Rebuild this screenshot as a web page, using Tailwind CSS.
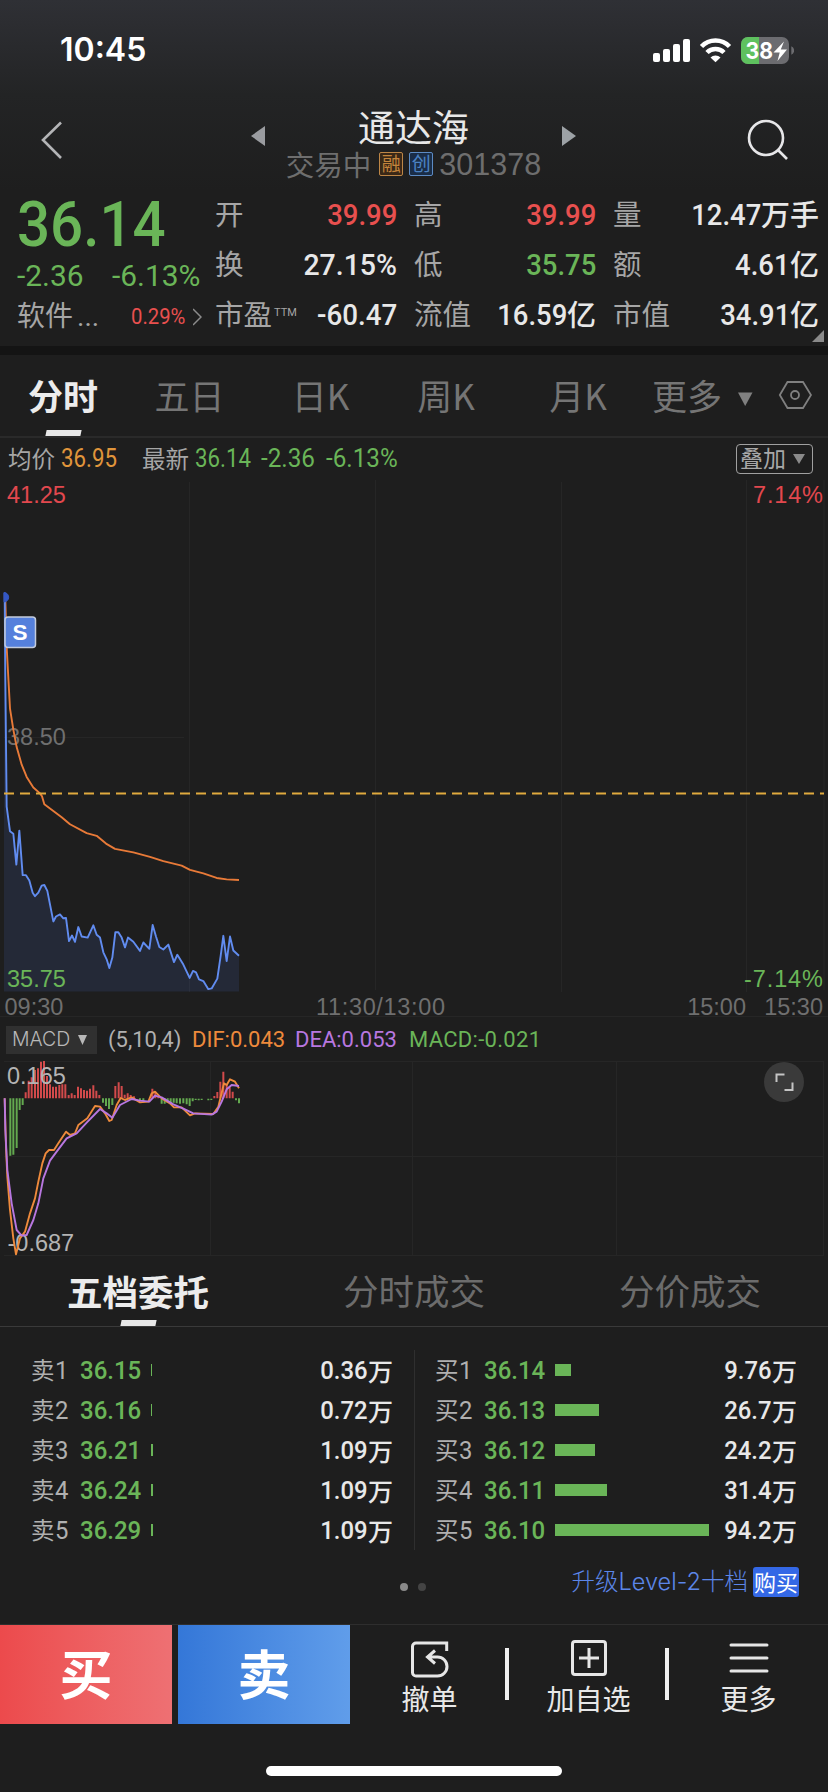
<!DOCTYPE html>
<html lang="zh-CN">
<head>
<meta charset="utf-8">
<title>通达海 301378</title>
<script src="https://cdn.jsdelivr.net/npm/@tailwindcss/browser@4"></script>
</head>
<body class="bg-[#1e1e1e]">
<main class="flex h-[1792px] w-[828px] flex-col overflow-hidden bg-[#1e1e1e] font-['Roboto','Noto_Sans_CJK_SC',sans-serif] leading-none whitespace-nowrap text-[#e8e8e8]">

  <div class="h-[190px] bg-linear-to-b from-[#2f3035] via-[#232425] to-[#1e1e1e]">
    <!-- status bar -->
    <div class="flex h-[100px] items-center justify-between pr-[34px] pl-[60px]">
      <span class="font-['Inter',sans-serif] text-[32px] font-semibold text-white">10:45</span>
      <svg class="h-[28px] w-[142px]" viewBox="652 35 142 28" fill="#fff">
        <rect x="653" y="52" width="7" height="9" rx="2"/><rect x="663" y="48" width="7" height="13" rx="2"/><rect x="673" y="43" width="7" height="18" rx="2"/><rect x="683" y="38" width="7" height="23" rx="2"/>
        <g fill="none" stroke="#fff" stroke-width="4.6"><path d="M701.5 45.5a19.5 19.5 0 0 1 28 0"/><path d="M707 51.5a12 12 0 0 1 17 0"/></g>
        <path d="M710.5 56.5a7 7 0 0 1 10 0l-5 4.8z"/>
        <clipPath id="bat"><rect x="741" y="36" width="48" height="27" rx="7"/></clipPath>
        <g clip-path="url(#bat)"><rect x="741" y="36" width="48" height="27" fill="#6c6c70"/><rect x="741" y="36" width="18" height="27" fill="#5ec15f"/></g>
        <path d="M791.3 45.3v8.500a4.600 4.600 0 0 0 0-8.500z" fill="#6c6c70"/>
        <text x="745.5" y="57.5" font-family="Inter" font-size="23" font-weight="700" textLength="27.5" lengthAdjust="spacingAndGlyphs">38</text>
        <path d="M784 40.500l-10.500 11h6.200l-2.200 8.500 9.500-11.500h-6.200z"/>
      </svg>
    </div>
    <!-- title bar -->
    <header class="flex h-[90px] items-start justify-between pr-[39px] pl-[41px]">
      <svg class="mt-[20px] mr-[17px] h-[40px] w-[22px]" viewBox="0 0 22 40" fill="none" stroke="#b4b5b7" stroke-width="2.600"><path d="M20 2.500L2 20l18 18"/></svg>
      <div class="flex w-[325px] flex-col items-center">
        <div class="flex h-[52px] w-full items-start justify-between">
          <svg class="mt-[26px] h-[20px] w-[14px]" viewBox="0 0 14 20"><path d="M14 0v20L0 10z" fill="#9a9ca0"/></svg>
          <h1 class="mt-[6px] font-['Noto_Sans_CJK_SC'] text-[37px] leading-[40px]">通达海</h1>
          <svg class="mt-[26px] h-[20px] w-[14px]" viewBox="0 0 14 20"><path d="M0 0v20l14-10z" fill="#9da2a6"/></svg>
        </div>
        <div class="flex h-[24px] items-center gap-[6px] text-[#6e6e6e]">
          <span class="font-['Noto_Sans_CJK_SC'] text-[28.500px]">交易中</span>
          <span class="ml-0.5 flex h-[24px] w-[24px] items-center justify-center rounded-xs border border-[#bd8646] bg-[#3a2817] text-[19px] text-[#c4853c]">融</span>
          <span class="flex h-[24px] w-[24px] items-center justify-center rounded-xs border border-[#5c8bc4] bg-[#1a2d47] text-[19px] text-[#4c83c3]">创</span>
          <span class="font-['Liberation_Sans'] text-[30.500px]">301378</span>
        </div>
      </div>
      <svg class="mt-[19px] h-[42px] w-[42px]" viewBox="0 0 42 42" fill="none" stroke="#e6e6e8" stroke-width="2.600"><circle cx="19" cy="19" r="17"/><path d="M31 31l9 9"/></svg>
    </header>
  </div>

  <!-- quote summary -->
  <section class="grid h-[156px] shrink-0 grid-cols-[181px_182px_182px_206px] gap-x-[17px] pl-[17px] text-[29.500px]">
    <div class="flex flex-col text-[#6ab558]">
      <div class="flex h-[69px] items-center"><b class="origin-left scale-x-[.925] text-[63px] font-medium">36.14</b></div>
      <div class="flex h-[34px] items-center pt-[1px] text-[29px]"><span class="w-[96px] origin-left scale-x-[1.03]">-2.36</span><span class="origin-left scale-x-[1.03]">-6.13%</span></div>
      <div class="flex h-[47px] items-center justify-between"><span class="text-[28px] text-[#a6a6a6]">软件<span class="ml-1">...</span></span><span class="flex items-center gap-[8px]"><span class="origin-right scale-x-90 text-[22.500px] text-[#e8504f]">0.29%</span><svg class="mr-[-4px] h-[18px] w-[9px]" viewBox="0 0 9 18" fill="none" stroke="#8c8c8c" stroke-width="1.500"><path d="M0 1l8 8-8 8"/></svg></span></div>
    </div>
    <div class="grid grid-rows-[50px_50px_50px] pt-[1px]">
      <div class="flex items-center justify-between"><span class="text-[28.500px] text-[#a6a6a6]">开</span><span class="origin-right scale-x-[.93] font-medium text-[#e8504f]">39.99</span></div>
      <div class="flex items-center justify-between"><span class="text-[28.500px] text-[#a6a6a6]">换</span><span class="origin-right scale-x-[.965] font-medium">27.15%</span></div>
      <div class="flex items-center justify-between"><span class="flex text-[28.500px] text-[#a6a6a6]">市盈<sup class="top-0 mt-[5px] ml-[2px] text-[11px] leading-none">TTM</sup></span><span class="origin-right scale-x-[.94] font-medium">-60.47</span></div>
    </div>
    <div class="grid grid-rows-[50px_50px_50px] pt-[1px]">
      <div class="flex items-center justify-between"><span class="text-[28.500px] text-[#a6a6a6]">高</span><span class="origin-right scale-x-[.93] font-medium text-[#e8504f]">39.99</span></div>
      <div class="flex items-center justify-between"><span class="text-[28.500px] text-[#a6a6a6]">低</span><span class="origin-right scale-x-[.93] font-medium text-[#6ab558]">35.75</span></div>
      <div class="flex items-center justify-between"><span class="text-[28.500px] text-[#a6a6a6]">流值</span><span class="flex items-center font-medium"><span class="origin-right scale-x-[.93]">16.59</span><span class="text-[29px]">亿</span></span></div>
    </div>
    <div class="relative grid grid-rows-[50px_50px_50px] pt-[1px]">
      <div class="flex items-center justify-between"><span class="text-[28.500px] text-[#a6a6a6]">量</span><span class="flex items-center font-medium"><span class="origin-right scale-x-[.93]">12.47</span><span class="text-[29px]">万手</span></span></div>
      <div class="flex items-center justify-between"><span class="text-[28.500px] text-[#a6a6a6]">额</span><span class="flex items-center font-medium"><span class="origin-right scale-x-[.93]">4.61</span><span class="text-[29px]">亿</span></span></div>
      <div class="flex items-center justify-between"><span class="text-[28.500px] text-[#a6a6a6]">市值</span><span class="flex items-center font-medium"><span class="origin-right scale-x-[.93]">34.91</span><span class="text-[29px]">亿</span></span></div>
      <svg class="absolute right-[-5px] bottom-[4px] h-[12px] w-[12px]" viewBox="0 0 12 12"><path d="M12 0v12H0z" fill="#8a8a8a"/></svg>
    </div>
  </section>
  <div class="h-[9px] shrink-0 bg-[#141414]"></div>

  <!-- period tabs -->
  <nav class="flex h-[83px] shrink-0 border-b-2 border-[#2a2a2a] font-['Noto_Sans_CJK_SC'] text-[35px] text-[#757575]">
    <div class="flex w-[126px] flex-col items-center justify-between pt-[22px]"><span class="text-[35px] font-bold text-[#ececec]">分时</span><i class="h-[6px] w-[35px] -skew-x-12 bg-[#e8e8e8]"></i></div>
    <div class="w-[127px] pt-[22px] text-center">五日</div>
    <div class="w-[135px] pt-[22px] text-center">日K</div>
    <div class="w-[116px] pt-[22px] text-center">周K</div>
    <div class="w-[148px] pt-[22px] text-center">月K</div>
    <div class="w-[86px] pt-[22px]">更多</div>
    <svg class="mt-[26px] h-[28px] w-[74px]" viewBox="738 381 74 28"><path d="M738 392.500h14.500L745.200 406z" fill="#808080"/><g fill="none" stroke="#808080" stroke-width="1.800"><path d="M787.500 382h15.500l8 13-8 13h-15.500l-7.700-13z"/><circle cx="795" cy="395" r="4"/></g></svg>
  </nav>

  <!-- price line -->
  <div class="flex h-[42px] shrink-0 items-center justify-between pr-[15px] pb-px pl-[8px] text-[25px] text-[#6ab558]">
    <div class="flex items-center">
      <span class="w-[53px] font-['Noto_Sans_CJK_SC'] text-[23.500px] text-[#a6a6a6]">均价</span>
      <span class="w-[81px] origin-left scale-x-[.89] text-[#e0953b]">36.95</span>
      <span class="w-[53px] font-['Noto_Sans_CJK_SC'] text-[23.500px] text-[#a6a6a6]">最新</span>
      <span class="w-[66px] origin-left scale-x-[.89]">36.14</span><span class="w-[65px] origin-left scale-x-[.97]">-2.36</span><span class="origin-left scale-x-[.97]">-6.13%</span>
    </div>
    <span class="mt-px flex h-[30px] w-[77px] items-center gap-[7px] rounded-[4px] border border-[#a0a0a0] pl-[3px] font-['Noto_Sans_CJK_SC'] text-[23px] text-[#a8a8a8]"><span class="mt-[-3px]">叠加</span><svg class="h-[10px] w-[12px]" viewBox="0 0 12 10"><path d="M0 0h12L6 10z" fill="#8a8a8a"/></svg></span>
  </div>

  <!-- intraday chart -->
  <svg class="block h-[538px] w-[828px] shrink-0" viewBox="0 480 828 538" font-family="Liberation Sans, Arial, sans-serif" font-size="23.500">
    <g stroke="#262626" stroke-width="1"><path d="M189.500 482v510M375.500 480v510M561.500 482v510M746.500 480v512M824 480v510M4 737.500h180M0 1016.500h828"/></g>
    <text x="7" y="502.500" fill="#e2484e">41.25</text><text x="823" y="502.500" fill="#e2484e" text-anchor="end" textLength="70">7.14%</text>
    <g fill="#6f6f6f"><text x="7" y="744.500">38.50</text>
    <text x="4.500" y="1014.500">09:30</text><text x="316" y="1014.500" textLength="129">11:30/13:00</text><text x="746" y="1014.500" text-anchor="end">15:00</text><text x="823" y="1014.500" text-anchor="end">15:30</text></g>
    <g transform="translate(0 470) scale(.33333 .35077)" fill="none" stroke-width="1.900" stroke-linejoin="round">
      <path fill="#4b73d8" fill-opacity=".14" d="M12 1487V350L16 600 20 960 30 1030 40 1037 49 1125 58 1028 68 1155 78 1155 88 1170 98 1205 105 1215 115 1205 125 1185 133 1183 142 1200 160 1287 168 1273 180 1267 190 1278 198 1277 207 1343 216 1327 225 1345 235 1303 245 1330 263 1333 280 1298 290 1325 300 1333 310 1375 320 1395 328 1420 337 1390 346 1318 355 1318 365 1333 375 1361 384 1333 400 1345 420 1371 430 1347 448 1365 458 1297 468 1330 478 1360 490 1367 505 1353 522 1403 532 1382 550 1410 569 1448 579 1428 588 1432 597 1452 610 1457 625 1480 635 1478 652 1450 662 1385 670 1328 680 1400 690 1330 700 1370 717 1385V1487z"/>
      <path vector-effect="non-scaling-stroke" stroke="#e87a38" d="M16 370L20 505 26 610 30 680 40 740 50 790 65 840 80 875 100 905 120 922 126 930 133 953 160 972 185 990 210 1010 260 1035 290 1043 318 1065 345 1080 400 1090 450 1103 490 1115 545 1128 570 1140 610 1150 650 1163 680 1167 717 1169"/>
      <path vector-effect="non-scaling-stroke" stroke="#618cf0" d="M14 350L16 600 20 960 30 1030 40 1037 49 1125 58 1028 68 1155 78 1155 88 1170 98 1205 105 1215 115 1205 125 1185 133 1183 142 1200 160 1287 168 1273 180 1267 190 1278 198 1277 207 1343 216 1327 225 1345 235 1303 245 1330 263 1333 280 1298 290 1325 300 1333 310 1375 320 1395 328 1420 337 1390 346 1318 355 1318 365 1333 375 1361 384 1333 400 1345 420 1371 430 1347 448 1365 458 1297 468 1330 478 1360 490 1367 505 1353 522 1403 532 1382 550 1410 569 1448 579 1428 588 1432 597 1452 610 1457 625 1480 635 1478 652 1450 662 1385 670 1328 680 1400 690 1330 700 1370 717 1385"/>
    </g>
    <path d="M4 592.500a5 5 0 0 1 0 9.500z" fill="#3457c4"/><path d="M4 592.500a4.700 4.700 0 0 1 0 9.400z" stroke="#3457c4" fill="#3457c4"/>
    <path d="M4 793.500H824" stroke="#e0aa3e" stroke-width="2" stroke-dasharray="10 6"/>
    <rect x="5" y="617" width="30.500" height="30.500" rx="3" fill="#5580dc" stroke="#c3cbdc" stroke-width="1.500"/><text x="20" y="640" fill="#fff" font-weight="700" font-size="22.500" text-anchor="middle">S</text>
    <g fill="#6ab558"><text x="7" y="986.500">35.75</text><text x="823" y="986.500" text-anchor="end" textLength="79">-7.14%</text></g>
  </svg>

  <!-- indicator header -->
  <div class="flex h-[43px] shrink-0 items-center pl-[6px] text-[22px]">
    <span class="mr-[11px] flex h-[28px] w-[91px] items-center gap-[8px] bg-[#303030] pl-[6px] font-['Inter'] text-[19.500px] font-light text-[#b8b8b8]">MACD<svg class="h-[10px] w-[9px]" viewBox="0 0 9 10"><path d="M0 0h9L4.500 10z" fill="#b8b8b8"/></svg></span>
    <span class="w-[84px] text-[#b0b0b0]">(5,10,4)</span>
    <span class="w-[103px] text-[#ee8a3c]">DIF:0.043</span><span class="w-[114px] text-[#b877e0]">DEA:0.053</span><span class="tracking-[.3px] text-[#6ab558]">MACD:-0.021</span>
  </div>

  <!-- MACD chart -->
  <svg class="block h-[199px] w-[828px] shrink-0" viewBox="0 1061 828 199" font-family="Liberation Sans, Arial, sans-serif" font-size="23.500">
    <path d="M4 1061.500h820M4 1156.500h820M4 1255.500h820M210.500 1062v193M412.500 1062v193M616.500 1062v193M823.500 1062v193" stroke="#262626" fill="none"/>
    <g transform="translate(0 990) scale(.33333)" fill="none" stroke-linejoin="round">
      <path stroke="#63a94f" stroke-width="6" d="M31 325V497M40 325V494M50 325V474M59 325V360M68 325V345M309 325V338M318 325V348M327 325V357M337 325V345M420 325V333M430 325V333M485 325V341M494 325V341M503 325V339M512 325V343M521 325V338M530 325V340M540 325V341M550 325V340M560 325V343M569 325V348M578 325V334M587 326V330M596 326V331M605 326V330M625 326V331M634 326V330M708 325V331M717 325V340"/>
      <path stroke="#d24a4b" stroke-width="6" d="M77 325V307M86 325V272M95 325V262M105 325V240M114 325V235M123 325V215M132 325V212M141 325V258M150 325V283M159 325V290M168 325V290M178 325V285M187 325V283M196 325V283M206 325V315M215 325V310M224 325V315M234 325V290M243 325V295M252 325V300M261 325V302M270 325V296M280 325V286M289 325V302M298 325V315M346 325V288M356 325V277M365 325V288M374 325V314M383 325V310M392 325V315M402 325V319M457 325V296M466 325V305M475 325V320M643 325V318M652 325V306M661 325V275M670 325V245M680 325V282M689 325V292M698 325V305"/>
    </g>
    <g fill="#b4b4b4"><text x="7" y="1083.500">0.165</text><text x="7.500" y="1251">-0.687</text></g>
    <g transform="translate(0 990) scale(.33333)" fill="none" stroke-linejoin="round" stroke-width="1.900">
      <path vector-effect="non-scaling-stroke" stroke="#ee8a3c" d="M14 325L18 470 22 560 30 660 40 745 48 793 60 745 75 725 90 670 105 625 115 575 127 520 137 490 147 480 162 480 175 460 198 425 210 435 225 430 235 405 262 385 285 348 300 350 315 370 328 393 335 390 350 345 362 324 375 330 395 322 420 337 445 335 455 310 465 305 485 325 510 340 522 352 545 352 570 376 585 370 640 372 655 350 672 280 680 285 690 268 705 275 717 295"/>
      <path vector-effect="non-scaling-stroke" stroke="#b877e0" d="M14 325L16 420 22 540 35 640 50 720 65 737 80 735 100 690 115 640 130 565 150 512 170 485 200 445 230 430 260 398 300 357 320 370 337 383 360 345 395 327 420 332 448 335 465 317 485 322 520 343 550 356 580 370 635 374 650 365 665 335 680 298 695 285 717 288"/>
    </g>
    <circle cx="784" cy="1082" r="20" fill="#3a3a3a"/>
    <path d="M776.500 1082v-7.500h8M784.500 1090h8v-7.500" fill="none" stroke="#c4c4c4" stroke-width="2"/>
  </svg>

  <!-- order book tabs -->
  <nav class="grid h-[67px] shrink-0 grid-cols-3 border-b border-[#3a3a3a] font-['Noto_Sans_CJK_SC'] text-[35.500px] text-[#6c6c6c]">
    <div class="flex flex-col items-center justify-between pt-[13px]"><span class="font-bold text-[#ececec]">五档委托</span><i class="h-[6px] w-[35px] -skew-x-12 bg-[#e8e8e8]"></i></div>
    <div class="pt-[12px] text-center">分时成交</div>
    <div class="pt-[12px] text-center">分价成交</div>
  </nav>

  <!-- order book -->
  <section class="mt-[23px] grid h-[197px] shrink-0 grid-cols-[362px_404px] pl-[31px]">
    <div id="sell"></div>
    <div id="buy" class="ml-[21px] border-l border-[#2f2f2f] pl-[20px]"></div>
  </section>

  <div class="flex h-[77px] shrink-0 items-center justify-end gap-[5px] pr-[29px] pb-[7px]">
    <div class="mr-[141px] flex gap-[10px] pt-[9px]"><i class="size-[8px] rounded-full bg-[#8a8a8a]"></i><i class="size-[8px] rounded-full bg-[#444]"></i></div>
    <span class="font-['Inter','Noto_Sans_CJK_SC'] text-[23.500px] font-light text-[#5c86e8]">升级Level-2十档</span>
    <span class="flex h-[30px] w-[46px] items-center justify-center rounded-[3px] bg-[#3468e6] pb-[3px] font-['Noto_Sans_CJK_SC'] text-[22px] text-white">购买</span>
  </div>

  <!-- action bar -->
  <footer class="flex h-[101px] shrink-0 items-start border-t border-[#2e2e2e] font-['Noto_Sans_CJK_SC'] text-[28px]">
    <button class="h-[99px] w-[172px] bg-linear-to-r from-[#ec4a4c] to-[#ee7073] pb-[5px] text-[53px] leading-none font-bold text-white">买</button>
    <button class="ml-[6px] h-[99px] w-[172px] bg-linear-to-r from-[#3477d8] to-[#609dea] pb-[5px] text-[53px] leading-none font-bold text-white">卖</button>
    <div class="flex w-[155px] flex-col items-center gap-[6px] pt-[15px] pl-[4px]">
      <svg class="h-[38px] w-[40px]" viewBox="411 1640 40 38" fill="none" stroke="#e6e6e6" stroke-width="3"><path d="M447.700 1651v-8H417a3.500 3.500 0 0 0-3.500 3.500v26a3.500 3.500 0 0 0 3.500 3.500h21.500a9.500 9.500 0 0 0 0-19H429M436 1650.500l-7.500 6.500 7.500 6.500"/></svg>
      <span>撤单</span>
    </div>
    <i class="mt-[23px] h-[52px] w-[4px] bg-[#f0f0f0]"></i>
    <div class="flex w-[156px] flex-col items-center gap-[6px] pt-[15px] pl-[3px]">
      <svg class="h-[38px] w-[38px]" viewBox="0 0 38 38" fill="none" stroke="#e6e6e6" stroke-width="3"><rect x="2.500" y="1.500" width="33" height="33" rx="2.500"/><path d="M9 18h20M19 8v20"/></svg>
      <span>加自选</span>
    </div>
    <i class="mt-[23px] h-[52px] w-[4px] bg-[#f0f0f0]"></i>
    <div class="flex w-[159px] flex-col items-center gap-[6px] pt-[15px]">
      <svg class="h-[38px] w-[40px]" viewBox="0 0 40 38" stroke="#e6e6e6" stroke-width="3" stroke-linecap="round"><path d="M2 5h36M2 18h36M2 31h36"/></svg>
      <span>更多</span>
    </div>
  </footer>
  <div class="mx-auto mt-[41px] h-[10px] w-[296px] shrink-0 rounded-full bg-white"></div>
</main>

<script>
  const row = (label, n, price, width, amount) => `
    <div class="flex h-[40px] items-center text-[26.500px]">
      <span class="flex w-[49px] shrink-0 items-center text-[#b0b0b0]"><span class="font-['Noto_Sans_CJK_SC'] text-[23.500px]">${label}</span><span class="origin-left scale-x-90">${n}</span></span>
      <span class="w-[71px] shrink-0 origin-left scale-x-[.905] font-medium text-[#6ab558]">${price}</span>
      <i class="h-[12px] shrink-0 bg-[#6ab558]" style="width:${width}px"></i>
      <span class="ml-auto flex items-center font-medium"><span class="origin-right scale-x-[.9]">${amount}</span><span class="font-['Noto_Sans_CJK_SC'] text-[25px] font-medium">万</span></span>
    </div>`;
  document.getElementById('sell').innerHTML = [['36.15',.5,'0.36'],['36.16',1.2,'0.72'],['36.21',2,'1.09'],['36.24',2,'1.09'],['36.29',2,'1.09']]
    .map(([p, w, a], i) => row('卖', i + 1, p, w, a)).join('');
  document.getElementById('buy').innerHTML = [['36.14',16,'9.76'],['36.13',43.5,'26.7'],['36.12',39.5,'24.2'],['36.11',51.5,'31.4'],['36.10',153.5,'94.2']]
    .map(([p, w, a], i) => row('买', i + 1, p, w, a)).join('');
</script>
</body>
</html>
